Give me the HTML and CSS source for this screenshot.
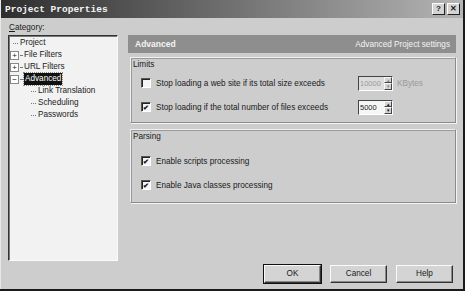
FILE: index.html
```html
<!DOCTYPE html>
<html lang="en">
<head>
    <meta charset="UTF-8">
    <title>Project Properties</title>
    <link rel="stylesheet" href="styles.css">
</head>
<body>
<div class="window">
    <div class="titlebar">
        <span class="title">Project Properties</span>
        <div class="caption-buttons">
            <span class="cap-btn">?</span>
            <span class="cap-btn">&#x2715;</span>
        </div>
    </div>
    <div class="content">
        <div class="category-label"><u>C</u>ategory:</div>
        <div class="main">
            <div class="tree">
                <div class="node leaf"><span class="hline"></span>Project</div>
                <div class="node"><span class="expander">+</span>File Filters</div>
                <div class="node"><span class="expander">+</span>URL Filters</div>
                <div class="node"><span class="expander">&minus;</span><span class="selected">Advanced</span></div>
                <div class="node child"><span class="hline"></span>Link Translation</div>
                <div class="node child"><span class="hline"></span>Scheduling</div>
                <div class="node child"><span class="hline"></span>Passwords</div>
            </div>
            <div class="panel">
                <div class="panel-header">
                    <span class="panel-title">Advanced</span>
                    <span class="panel-sub">Advanced Project settings</span>
                </div>
                <div class="group limits">
                    <div class="group-label">Limits</div>
                    <div class="row">
                        <span class="check"></span>
                        <span class="label">Stop loading a web site if its total size exceeds</span>
                        <span class="spin disabled"><span class="spin-value">10000</span><span class="spin-arrows"><span>&#x25B4;</span><span>&#x25BE;</span></span></span>
                        <span class="unit">KBytes</span>
                    </div>
                    <div class="row">
                        <span class="check checked">&#x2714;</span>
                        <span class="label">Stop loading if the total number of files exceeds</span>
                        <span class="spin"><span class="spin-value">5000</span><span class="spin-arrows"><span>&#x25B4;</span><span>&#x25BE;</span></span></span>
                    </div>
                </div>
                <div class="group parsing">
                    <div class="group-label">Parsing</div>
                    <div class="row">
                        <span class="check checked">&#x2714;</span>
                        <span class="label">Enable scripts processing</span>
                    </div>
                    <div class="row">
                        <span class="check checked">&#x2714;</span>
                        <span class="label">Enable Java classes processing</span>
                    </div>
                </div>
            </div>
        </div>
        <div class="footer">
            <span class="button default">OK</span>
            <span class="button">Cancel</span>
            <span class="button">Help</span>
        </div>
    </div>
</div>
</body>
</html>
```

FILE: styles.css
```css
body {
    margin: 0;
    background: #1a1a1a;
    font-family: "Liberation Sans", Arial, sans-serif;
    font-size: 8.2px;
    color: #1a1a1a;
}
.window {
    width: 462px;
    height: 289px;
    background: #cdcdcd;
    border-left: 1px solid #e8e8e8;
    display: flex;
    flex-direction: column;
}
.titlebar {
    height: 18px;
    background: linear-gradient(to right, #2e2e2e, #6a6a6a 45%, #b4b4b4);
    display: flex;
    align-items: center;
    justify-content: space-between;
    padding: 0 3px 0 4px;
}
.title {
    font-family: "Liberation Mono", "DejaVu Sans Mono", monospace;
    font-weight: bold;
    font-size: 9.5px;
    color: #f4f4f4;
}
.caption-buttons {
    display: flex;
    gap: 2px;
}
.cap-btn {
    width: 11px;
    height: 10px;
    background: #d4d4d4;
    border: 1px solid;
    border-color: #fff #222 #222 #fff;
    font-weight: bold;
    font-size: 8px;
    line-height: 10px;
    text-align: center;
}
.content {
    flex: 1;
    padding: 0 7px;
    display: flex;
    flex-direction: column;
}
.category-label {
    height: 17px;
    line-height: 19px;
    padding-left: 1px;
}
.main {
    display: flex;
    gap: 10px;
}
.tree {
    width: 107px;
    height: 223px;
    background: #f2f2f2;
    border: 1px solid;
    border-color: #333 #fafafa #fafafa #333;
    box-shadow: inset 1px 1px 0 #777;
    padding: 1px 0 0 1px;
}
.node {
    height: 12px;
    line-height: 12px;
    display: flex;
    align-items: center;
    white-space: nowrap;
}
.hline {
    width: 5px;
    margin: 0 2px 0 3px;
    border-top: 1px dotted #777;
}
.expander {
    width: 7px;
    height: 7px;
    border: 1px solid #888;
    background: #fff;
    font-size: 8px;
    line-height: 7px;
    text-align: center;
    margin: 0 5px 0 0;
    position: relative;
}
.expander::after {
    content: "";
    position: absolute;
    left: 9px;
    top: 3px;
    width: 2px;
    border-top: 1px dotted #777;
}
.selected {
    background: #111;
    color: #fff;
    padding: 0 1px;
    outline: 1px dotted #888;
}
.child {
    padding-left: 18px;
}
.panel {
    flex: 1;
    display: flex;
    flex-direction: column;
}
.panel-header {
    height: 18px;
    background: #8e8e8e;
    display: flex;
    align-items: center;
    justify-content: space-between;
    padding: 0 6px 0 7px;
    color: #f4f4f4;
    margin-bottom: 4px;
}
.panel-title {
    font-weight: bold;
    font-size: 8.5px;
}
.group {
    margin-left: 2px;
    padding: 0 10px;
    border: 1px solid;
    border-color: #f0f0f0 #8a8a8a #8a8a8a #f0f0f0;
    box-shadow: inset 1px 1px 0 #9a9a9a, 1px 1px 0 #f4f4f4;
}
.group-label {
    height: 13px;
    line-height: 14px;
    margin-left: -8px;
}
.limits {
    height: 64px;
    margin-bottom: 6px;
}
.parsing {
    height: 72px;
}
.row {
    display: flex;
    align-items: center;
    height: 24px;
}
.parsing .group-label {
    margin-bottom: 6px;
}
.check {
    width: 8px;
    height: 8px;
    background: #f4f4f4;
    border: 1px solid;
    border-color: #555 #fff #fff #555;
    box-shadow: inset 1px 1px 0 #222;
    margin-right: 5px;
    font-size: 7px;
    line-height: 9px;
    text-align: center;
    color: #111;
    font-weight: bold;
}
.label {
    width: 202px;
}
.parsing .label {
    width: auto;
}
.spin {
    display: flex;
    height: 13px;
    width: 33px;
    border: 1px solid;
    border-color: #444 #fff #fff #444;
    background: #f6f6f6;
    font-size: 7.5px;
}
.spin.disabled {
    background: #dcdcdc;
    color: #999;
}
.spin-value {
    flex: 1;
    padding-left: 1px;
    line-height: 13px;
    overflow: hidden;
}
.spin-arrows {
    display: flex;
    flex-direction: column;
    width: 8px;
}
.spin-arrows span {
    flex: 1;
    background: #d4d4d4;
    border: 1px solid;
    border-color: #fafafa #444 #444 #fafafa;
    font-size: 5px;
    line-height: 4px;
    text-align: center;
    color: #111;
}
.disabled .spin-arrows span {
    color: #888;
}
.unit {
    margin-left: 4px;
    color: #999;
}
.footer {
    display: flex;
    justify-content: flex-end;
    gap: 9px;
    padding: 4px 3px 0 0;
}
.button {
    width: 55px;
    height: 16px;
    line-height: 16px;
    text-align: center;
    background: #d4d4d4;
    border: 1px solid;
    border-color: #fafafa #333 #333 #fafafa;
    box-shadow: inset -1px -1px 0 #888;
}
.button.default {
    outline: 1px solid #111;
}
```
